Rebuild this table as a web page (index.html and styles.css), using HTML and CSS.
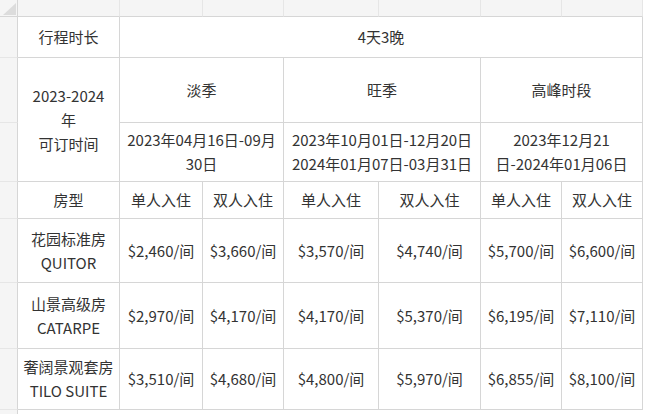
FILE: index.html
```html
<!DOCTYPE html>
<html lang="zh-CN">
<head>
<meta charset="utf-8">
<title>行程价格表</title>
<link rel="stylesheet" href="styles.css">
</head>
<body>
<table class="sheet">
  <colgroup>
    <col class="c-rh">
    <col class="c-a">
    <col class="c-b">
    <col class="c-c">
    <col class="c-d">
    <col class="c-e">
    <col class="c-f">
    <col class="c-g">
  </colgroup>
  <tr class="r-head">
    <th class="corner"><svg class="corner-tri" width="13" height="12" viewBox="0 0 13 12"><polygon points="13,0 13,12 0,12" fill="#dcdcdc"/></svg></th>
    <th class="colhead"></th>
    <th class="colhead"></th>
    <th class="colhead"></th>
    <th class="colhead"></th>
    <th class="colhead"></th>
    <th class="colhead"></th>
    <th class="colhead"></th>
  </tr>
  <tr class="r1">
    <th class="rowhead"></th>
    <td>行程时长</td>
    <td colspan="6">4天3晚</td>
  </tr>
  <tr class="r2">
    <th class="rowhead"></th>
    <td rowspan="2">2023-2024<br>年<br>可订时间</td>
    <td colspan="2">淡季</td>
    <td colspan="2">旺季</td>
    <td colspan="2">高峰时段</td>
  </tr>
  <tr class="r3">
    <th class="rowhead"></th>
    <td colspan="2">2023年04月16日-09月<br>30日</td>
    <td colspan="2">2023年10月01日-12月20日<br>2024年01月07日-03月31日</td>
    <td colspan="2">2023年12月21<br>日-2024年01月06日</td>
  </tr>
  <tr class="r4">
    <th class="rowhead"></th>
    <td>房型</td>
    <td>单人入住</td>
    <td>双人入住</td>
    <td>单人入住</td>
    <td>双人入住</td>
    <td>单人入住</td>
    <td>双人入住</td>
  </tr>
  <tr class="r5">
    <th class="rowhead"></th>
    <td>花园标准房<br>QUITOR</td>
    <td>$2,460/间</td>
    <td>$3,660/间</td>
    <td>$3,570/间</td>
    <td>$4,740/间</td>
    <td>$5,700/间</td>
    <td>$6,600/间</td>
  </tr>
  <tr class="r6">
    <th class="rowhead"></th>
    <td>山景高级房<br>CATARPE</td>
    <td>$2,970/间</td>
    <td>$4,170/间</td>
    <td>$4,170/间</td>
    <td>$5,370/间</td>
    <td>$6,195/间</td>
    <td>$7,110/间</td>
  </tr>
  <tr class="r7">
    <th class="rowhead"></th>
    <td>奢阔景观套房<br>TILO SUITE</td>
    <td>$3,510/间</td>
    <td>$4,680/间</td>
    <td>$4,800/间</td>
    <td>$5,970/间</td>
    <td>$6,855/间</td>
    <td>$8,100/间</td>
  </tr>
  <tr class="r8">
    <th class="rowhead last"></th>
    <td class="empty" colspan="7"></td>
  </tr>
</table>
</body>
</html>
```
FILE: styles.css
```css
html, body {
  margin: 0;
  padding: 0;
  background: #ffffff;
}
body {
  width: 646px;
  height: 414px;
  overflow: hidden;
  font-family: "Noto Sans CJK SC", "Noto Sans", sans-serif;
  font-size: 15px;
  line-height: 24px;
  color: #333333;
}
.sheet {
  border-collapse: separate;
  border-spacing: 0;
  table-layout: fixed;
  width: 643px;
}
.c-rh { width: 18px; }
.c-a { width: 102px; }
.c-b { width: 83px; }
.c-c { width: 81px; }
.c-d { width: 95px; }
.c-e { width: 102px; }
.c-f { width: 81px; }
.c-g { width: 81px; }

.sheet td {
  padding: 0;
  text-align: center;
  vertical-align: middle;
  border-right: 1px solid #d6d6d6;
  border-bottom: 1px solid #d6d6d6;
  white-space: nowrap;
  font-weight: normal;
}
.sheet th {
  padding: 0;
  background: #f5f5f5;
  font-weight: normal;
}
.corner {
  border-right: 1px solid #d6d6d6;
  border-bottom: 1px solid #d6d6d6;
  text-align: left;
  vertical-align: top;
  position: relative;
}
.corner-tri {
  position: absolute;
  left: 3px;
  top: 3px;
}
.colhead {
  border-right: 1px solid #e6e6e6;
  border-bottom: 1px solid #d6d6d6;
}
.rowhead {
  border-right: 1px solid #d6d6d6;
  border-bottom: 1px solid #e6e6e6;
}
.rowhead.last {
  border-bottom: none;
}
.sheet td.empty {
  border: none;
}
.r-head { height: 17px; }
.r1 { height: 41px; }
.r2 { height: 65px; }
.r3 { height: 59px; }
.r4 { height: 37px; }
.r5 { height: 64px; }
.r6 { height: 66px; }
.r7 { height: 61px; }
.r8 { height: 20px; }
```
